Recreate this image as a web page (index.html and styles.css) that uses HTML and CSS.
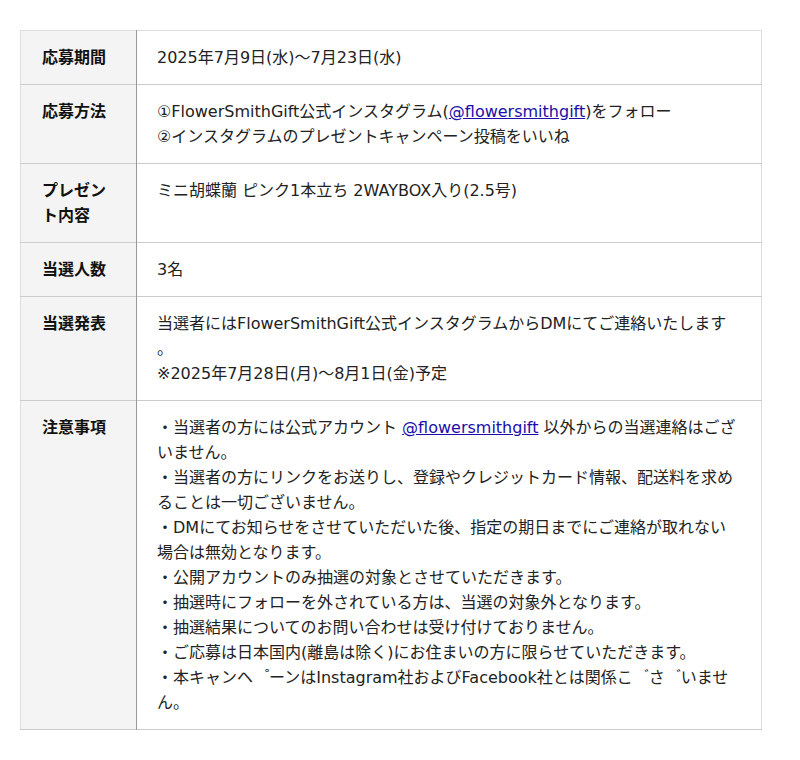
FILE: index.html
```html
<!DOCTYPE html>
<html lang="ja">
<head>
  <meta charset="UTF-8" />
  <meta name="viewport" content="width=device-width, initial-scale=1.0"/>
  <title>プレゼントキャンペーン</title>
  <link rel="stylesheet" href="styles.css">
</head>
<body>
  <div class="campaign">
    <table class="campaign-table">
      <tr>
        <th>応募期間</th>
        <td>2025年7月9日(水)〜7月23日(水)</td>
      </tr>
      <tr>
        <th>応募方法</th>
        <td>①FlowerSmithGift公式インスタグラム(<a href="#">@flowersmithgift</a>)をフォロー<br>②インスタグラムのプレゼントキャンペーン投稿をいいね</td>
      </tr>
      <tr>
        <th>プレゼント内容</th>
        <td>ミニ胡蝶蘭 ピンク1本立ち 2WAYBOX入り(2.5号)</td>
      </tr>
      <tr>
        <th>当選人数</th>
        <td>3名</td>
      </tr>
      <tr>
        <th>当選発表</th>
        <td>当選者にはFlowerSmithGift公式インスタグラムからDMにてご連絡いたします<br>。<br>※2025年7月28日(月)〜8月1日(金)予定</td>
      </tr>
      <tr>
        <th>注意事項</th>
        <td>
          ・当選者の方には公式アカウント <a href="#">@flowersmithgift</a> 以外からの当選連絡はございません。<br>
          ・当選者の方にリンクをお送りし、登録やクレジットカード情報、配送料を求めることは一切ございません。<br>
          ・DMにてお知らせをさせていただいた後、指定の期日までにご連絡が取れない場合は無効となります。<br>
          ・公開アカウントのみ抽選の対象とさせていただきます。<br>
          ・抽選時にフォローを外されている方は、当選の対象外となります。<br>
          ・抽選結果についてのお問い合わせは受け付けておりません。<br>
          ・ご応募は日本国内(離島は除く)にお住まいの方に限らせていただきます。<br>
          ・本キャンヘ&#x3000;&#x309A;ーンはInstagram社およびFacebook社とは関係こ&#x3000;&#x3099;さ&#x3000;&#x3099;いません。
        </td>
      </tr>
    </table>
  </div>
</body>
</html>
```

FILE: styles.css
```css
* {
  box-sizing: border-box;
}

body {
  margin: 0;
  padding: 0;
  background: #fff;
  color: #222;
  font-family: 'DejaVu Sans', 'Noto Sans CJK JP', sans-serif;
}

.campaign {
  padding: 30px 20px;
}

.campaign-table {
  width: 742px;
  border-collapse: collapse;
  border: 1px solid #ddd;
  font-size: 16px;
  line-height: 25px;
}

.campaign-table tr {
  border-bottom: 1px solid #ccc;
}

.campaign-table th,
.campaign-table td {
  padding: 14px 20px;
  text-align: left;
  vertical-align: top;
}

.campaign-table th {
  width: 116px;
  padding-left: 21px;
  background-color: #f4f4f4;
  border-right: 1px solid #999;
  font-weight: bold;
  color: #111;
}

.campaign-table a {
  color: #1a0dab;
  text-decoration: underline;
}
```
